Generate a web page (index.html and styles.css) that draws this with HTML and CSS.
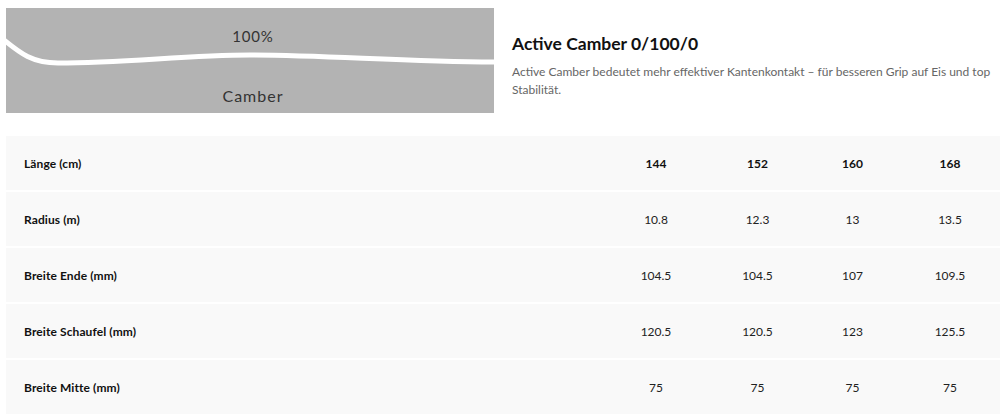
FILE: index.html
```html
<!DOCTYPE html>
<html lang="de">
<head>
<meta charset="utf-8">
<title>Active Camber</title>
<link rel="stylesheet" href="styles.css">
</head>
<body>
<section class="profile">
  <div class="diagram">
    <svg viewBox="0 0 488 105" width="488" height="105">
      <rect x="0" y="0" width="488" height="105" fill="#b3b3b3"/>
      <path d="M-2 32 C 14 45, 26 55, 52 55 C 120 55, 180 47, 244 47 C 320 47, 400 54, 490 54" fill="none" stroke="#ffffff" stroke-width="5"/>
      <text x="247" y="34" class="dia-text" text-anchor="middle">100%</text>
      <text x="247" y="94" class="dia-text big" text-anchor="middle">Camber</text>
    </svg>
  </div>
  <div class="info">
    <h2 class="title">Active Camber 0/100/0</h2>
    <p class="desc">Active Camber bedeutet mehr effektiver Kantenkontakt – für besseren Grip auf Eis und top Stabilität.</p>
  </div>
</section>
<div class="specs">
  <div class="row head">
    <div class="label">Länge (cm)</div><div class="val">144</div><div class="val">152</div><div class="val">160</div><div class="val">168</div>
  </div>
  <div class="row">
    <div class="label">Radius (m)</div><div class="val">10.8</div><div class="val">12.3</div><div class="val">13</div><div class="val">13.5</div>
  </div>
  <div class="row">
    <div class="label">Breite Ende (mm)</div><div class="val">104.5</div><div class="val">104.5</div><div class="val">107</div><div class="val">109.5</div>
  </div>
  <div class="row">
    <div class="label">Breite Schaufel (mm)</div><div class="val">120.5</div><div class="val">120.5</div><div class="val">123</div><div class="val">125.5</div>
  </div>
  <div class="row">
    <div class="label">Breite Mitte (mm)</div><div class="val">75</div><div class="val">75</div><div class="val">75</div><div class="val">75</div>
  </div>
</div>
</body>
</html>
```

FILE: styles.css
```css
html, body {
  margin: 0;
  padding: 0;
  background: #ffffff;
}
body {
  padding: 8px 0 0 6px;
  font-family: Lato, "Liberation Sans", sans-serif;
  color: #222;
  overflow: hidden;
}
.profile {
  display: flex;
  gap: 18px;
  align-items: flex-start;
}
.diagram svg {
  display: block;
}
.dia-text {
  font-family: Lato, "Liberation Sans", sans-serif;
  font-size: 15px;
  fill: #333333;
  letter-spacing: 0.8px;
}
.dia-text.big {
  font-size: 16px;
  letter-spacing: 1px;
}
.info {
  padding-top: 26px;
  width: 480px;
}
.title {
  margin: 0;
  font-size: 17.5px;
  font-weight: 700;
  line-height: 20px;
  color: #111;
}
.desc {
  margin: 9px 0 0;
  font-size: 12px;
  line-height: 18px;
  color: #666;
}
.specs {
  margin-top: 23px;
  background: #f9f9f9;
}
.row {
  display: grid;
  grid-template-columns: 1fr 108px 95px 95px 100px;
  align-items: center;
  height: 54px;
  border-bottom: 2px solid #ffffff;
  font-size: 12px;
  color: #222;
}
.label {
  padding-left: 18px;
  font-weight: 700;
  color: #111;
  letter-spacing: 0.1px;
}
.val {
  text-align: center;
}
.head .val {
  font-weight: 700;
  color: #111;
}
```
